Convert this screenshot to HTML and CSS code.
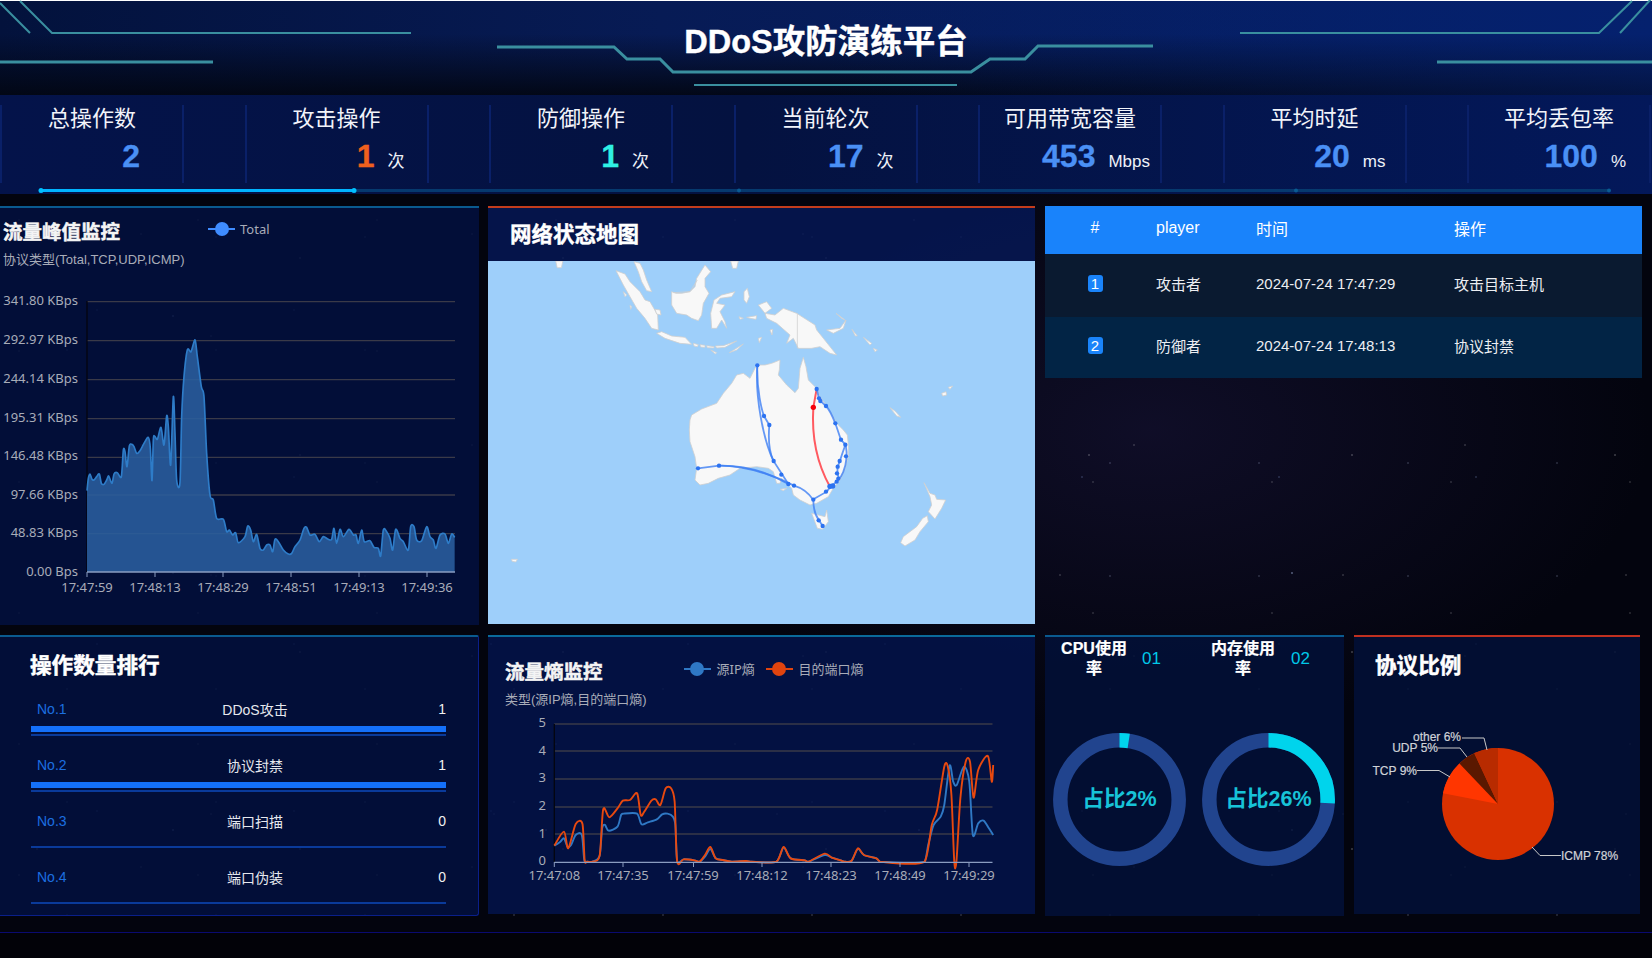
FILE: index.html
```html
<!DOCTYPE html>
<html lang="zh">
<head>
<meta charset="utf-8">
<title>DDoS攻防演练平台</title>
<link rel="stylesheet" href="styles.css">
</head>
<body>
<div class="page">
  <header class="topbar">
    <svg class="decor" viewBox="0 0 1652 95" aria-hidden="true">
      <g class="decor-thin">
        <polyline points="0,3 30,33"/>
        <polyline points="20,1 52,33 411,33"/>
        <polyline points="1240,33 1599,33 1632,1"/>
        <polyline points="1620,33 1652,-2"/>
        <polyline points="694,85 957,85"/>
      </g>
      <g class="decor-thick">
        <polyline points="0,62 213,62"/>
        <polyline points="1437,62 1652,62"/>
        <polyline points="497,47 614,47 627,59 660,59 673,72 971,72 990,59 1025,59 1038,46 1153,46"/>
      </g>
    </svg>
    <h1 class="title">DDoS攻防演练平台</h1>
  </header>

  <section class="stats">
    <div class="stat-grid">
      <div class="stat"><div class="stat-label">总操作数</div><div class="stat-value pr-44"><b class="blue">2</b></div></div>
      <div class="stat"><div class="stat-label">攻击操作</div><div class="stat-value pr-24"><b class="orange">1</b><span>次</span></div></div>
      <div class="stat"><div class="stat-label">防御操作</div><div class="stat-value pr-24"><b class="cyan">1</b><span>次</span></div></div>
      <div class="stat"><div class="stat-label">当前轮次</div><div class="stat-value pr-24"><b class="blue">17</b><span>次</span></div></div>
      <div class="stat"><div class="stat-label">可用带宽容量</div><div class="stat-value pr-12"><b class="blue">453</b><span>Mbps</span></div></div>
      <div class="stat"><div class="stat-label">平均时延</div><div class="stat-value pr-20"><b class="blue">20</b><span>ms</span></div></div>
      <div class="stat"><div class="stat-label">平均丢包率</div><div class="stat-value pr-25"><b class="blue">100</b><span>%</span></div></div>
    </div>
    <svg class="progress" viewBox="0 0 1652 8" aria-hidden="true">
      <line x1="41" y1="4.5" x2="1609" y2="4.5" class="p-dim"/>
      <line x1="41" y1="4.5" x2="354" y2="4.5" class="p-on"/>
      <circle cx="739" cy="4.5" r="2" class="p-dot-dim"/>
      <circle cx="1296" cy="4.5" r="2" class="p-dot-dim"/>
      <circle cx="1609" cy="4.5" r="2" class="p-dot-dim"/>
      <circle cx="41" cy="4.5" r="2.5" class="p-dot-on"/>
      <circle cx="354" cy="4.5" r="2.5" class="p-dot-on"/>
    </svg>
  </section>

  <main class="board">
    <section class="panel peak">
      <div class="chart-head">
        <h2 class="chart-title">流量峰值监控</h2>
        <div class="legend legend-peak"><span class="mark mark-blue"></span><span>Total</span></div>
      </div>
      <div class="subtitle">协议类型(Total,TCP,UDP,ICMP)</div>
      <svg class="chart" width="478" height="355" viewBox="0 270 478 355">
        <g class="grid-lines">
          <line x1="87" x2="455" y1="301.7" y2="301.7"/><line x1="87" x2="455" y1="340.7" y2="340.7"/>
          <line x1="87" x2="455" y1="379.7" y2="379.7"/><line x1="87" x2="455" y1="418.7" y2="418.7"/>
          <line x1="87" x2="455" y1="457.3" y2="457.3"/><line x1="87" x2="455" y1="495" y2="495"/>
          <line x1="87" x2="455" y1="533.7" y2="533.7"/>
        </g>
        <line class="axis-y" x1="87" x2="87" y1="301" y2="572"/>
        <g transform="translate(0,200) scale(.33333)">
          <polyline class="smooth area-line" data-base="1116" points="261,872 265,835 270,822 276,838 282,840 290,830 298,822 304,850 312,853 320,840 326,828 336,850 342,822 352,818 364,830 370,750 375,755 381,800 388,738 396,733 402,740 410,760 420,752 432,730 445,712 451,745 456,842 460,720 464,708 472,718 483,682 492,735 500,648 505,680 512,795 520,590 525,700 530,840 540,848 545,650 552,530 562,450 573,455 585,420 592,470 604,560 612,590 620,760 630,885 640,900 650,955 670,958 680,995 688,990 698,1005 707,998 715,1028 735,1010 743,978 752,990 760,1025 770,1003 780,1045 790,1050 800,1035 810,1035 818,1055 825,1018 835,1025 850,1050 865,1062 875,1060 885,1040 900,1020 912,985 920,982 930,1005 945,1003 958,1025 970,1010 985,1018 995,1018 1002,985 1010,1030 1020,988 1030,1010 1047,988 1060,1005 1068,1005 1075,1030 1085,990 1093,1025 1110,1022 1122,1042 1135,1045 1142,1068 1150,990 1160,995 1170,1015 1178,1050 1187,988 1200,1015 1210,1025 1225,1050 1232,980 1242,980 1250,1020 1265,1022 1280,980 1290,1010 1300,1020 1308,1045 1320,1005 1335,1002 1345,1030 1355,1002 1364,1012"/>
        </g>
        <line class="axis-x" x1="87" x2="455" y1="572" y2="572"/>
        <g class="ticks">
          <line x1="87" x2="87" y1="572" y2="577"/><line x1="155" x2="155" y1="572" y2="577"/><line x1="223" x2="223" y1="572" y2="577"/>
          <line x1="291" x2="291" y1="572" y2="577"/><line x1="359" x2="359" y1="572" y2="577"/><line x1="427" x2="427" y1="572" y2="577"/>
        </g>
        <g class="axis-label end">
          <text x="78" y="305">341.80 KBps</text><text x="78" y="343.500">292.97 KBps</text><text x="78" y="382.500">244.14 KBps</text>
          <text x="78" y="421.500">195.31 KBps</text><text x="78" y="460">146.48 KBps</text><text x="78" y="499">97.66 KBps</text>
          <text x="78" y="537">48.83 KBps</text><text x="78" y="576">0.00 Bps</text>
        </g>
        <g class="axis-label mid">
          <text x="87" y="591.500">17:47:59</text><text x="155" y="591.500">17:48:13</text><text x="223" y="591.500">17:48:29</text>
          <text x="291" y="591.500">17:48:51</text><text x="359" y="591.500">17:49:13</text><text x="427" y="591.500">17:49:36</text>
        </g>
      </svg>
    </section>

    <section class="panel map-panel">
      <h2 class="map-title">网络状态地图</h2>
      <svg class="map" width="547" height="363" viewBox="488 261 547 363">
        <rect x="488" y="261" width="547" height="363" class="sea"/>
        <g transform="translate(590,250) scale(.33333)" class="land">
          <polygon points="78,62 105,72 120,95 150,125 165,150 180,155 203,195 205,240 185,235 165,205 140,175 120,140 100,105"/>
          <polygon points="132,35 150,40 160,60 170,90 185,125 170,122 155,95 145,65"/>
          <polygon points="245,125 258,130 275,130 300,125 315,110 320,85 345,45 362,65 345,85 345,110 357,130 340,160 335,195 325,212 305,205 290,195 260,190 245,165"/>
          <polygon points="372,150 395,135 435,125 425,140 390,145 380,160 405,165 390,185 405,215 410,235 395,210 380,235 365,235 362,190"/>
          <polygon points="200,250 215,245 245,258 285,262 305,283 270,280 225,265"/>
          <polygon points="310,280 325,284 322,290 312,288"/>
          <polygon points="330,284 345,286 345,292 332,291"/>
          <polygon points="350,287 372,290 372,294 352,293"/>
          <polygon points="376,288 400,287 440,273 405,292 380,294"/>
          <polygon points="418,308 460,282 440,300"/>
          <polygon points="362,300 380,308 376,312"/>
          <polygon points="505,165 530,155 545,175 525,190 555,195 580,175 620,190 675,225 680,240 700,265 740,315 720,310 690,290 665,295 625,295 610,265 590,280 600,255 560,220 530,205 525,190"/>
          <polygon points="710,240 750,235 768,210 760,235 730,250"/>
          <polygon points="447,200 460,205 450,208"/>
          <polygon points="470,202 500,197 498,208 480,205"/>
          <polygon points="462,125 472,115 478,140 470,160 462,150"/>
          <polygon points="422,33 445,33 440,55 428,55"/>
          <polygon points="195,178 210,180 213,195 200,192"/>
          <polygon points="100,125 110,135 105,140"/>
          <polygon points="120,165 125,170 122,178"/>
          <polygon points="786,238 802,258 796,258"/>
          <polygon points="820,262 845,280 840,285"/>
          <polygon points="850,295 862,300 855,305"/>
          <polygon points="738,190 765,210 755,205"/>
          <polygon points="540,240 548,238 546,255"/>
          <polygon points="505,265 515,262 508,278"/>
          <polyline class="land-border" points="250,128 300,125 322,90"/>
          <polyline class="land-border" points="622,190 622,295"/>
        </g>
        <g transform="translate(480,200) scale(.35714,.33333)" class="land">
          <polygon points="212,183 232,183 228,203 216,203"/>
          <polygon points="88,1078 105,1078 100,1086 90,1084"/>
        </g>
        <g transform="translate(640,340) scale(.33333)">
          <g class="land">
            <polygon points="150,240 155,225 185,207 230,190 250,160 275,130 290,105 310,100 330,115 345,85 352,75 375,75 395,70 420,60 418,90 415,105 440,135 465,158 475,145 480,85 490,52 498,80 505,120 525,140 540,170 565,205 590,250 610,270 622,285 625,315 625,350 615,385 600,420 580,445 565,470 530,490 510,495 480,480 460,465 455,445 440,430 425,415 420,430 410,430 400,395 385,385 350,380 300,385 270,405 235,415 205,430 180,435 165,420 170,385 165,350 150,305 148,270"/>
            <polygon points="515,520 555,530 560,510 565,545 548,568 532,565"/>
            <polygon points="420,448 440,445 430,452"/>
            <polygon points="852,428 870,460 885,465 890,478 917,480 905,505 885,537 865,515 875,495 870,470"/>
            <polygon points="862,527 865,545 840,575 825,600 795,618 782,608 790,590 830,560 848,535"/>
            <polygon points="750,203 765,213 782,232 770,228"/>
            <polygon points="905,160 918,155 920,165 908,168"/>
            <polygon points="925,142 938,138 930,148"/>
          </g>
          <g class="route-red">
            <path d="M530,147 L520,202 C515,280 525,360 570,440"/>
          </g>
          <g class="route-blue">
            <path d="M352,76 C345,170 370,300 400,362 L445,432"/>
            <path d="M352,76 C350,150 365,210 372,228 L388,255 C385,290 385,330 400,362"/>
            <path d="M174,385 L237,377 C320,375 390,400 445,432"/>
            <path d="M237,377 C340,378 430,420 462,437 C490,445 510,465 520,480"/>
            <path d="M520,478 L560,455 L572,440 L590,425 L597,415 L592,400 L593,380 L600,362 C607,340 612,325 617,314 L603,300 L586,250 C578,230 570,210 558,198 L541,183 L537,175 L530,147"/>
            <path d="M617,314 C622,340 620,370 610,395 C605,410 595,420 590,425"/>
            <path d="M520,480 C520,510 525,525 537,541 L548,558"/>
          </g>
          <g class="route-dots">
            <circle cx="352" cy="76" r="6.500"/><circle cx="372" cy="228" r="6.500"/><circle cx="388" cy="255" r="6.500"/><circle cx="401" cy="363" r="6.500"/>
            <circle cx="424" cy="404" r="6.500"/><circle cx="445" cy="432" r="6.500"/><circle cx="462" cy="437" r="6.500"/><circle cx="520" cy="479" r="6.500"/>
            <circle cx="558" cy="455" r="6.500"/><circle cx="570" cy="439" r="8"/><circle cx="578" cy="438" r="8"/><circle cx="590" cy="425" r="6.500"/>
            <circle cx="595" cy="416" r="6.500"/><circle cx="591" cy="400" r="6.500"/><circle cx="593" cy="380" r="6.500"/><circle cx="599" cy="363" r="6.500"/>
            <circle cx="618" cy="349" r="6.500"/><circle cx="616" cy="314" r="6.500"/><circle cx="603" cy="299" r="6.500"/><circle cx="586" cy="250" r="6.500"/>
            <circle cx="558" cy="198" r="6.500"/><circle cx="541" cy="183" r="6.500"/><circle cx="537" cy="175" r="6.500"/><circle cx="530" cy="147" r="6.500"/>
            <circle cx="237" cy="377" r="6.500"/><circle cx="174" cy="385" r="6.500"/><circle cx="536" cy="541" r="6.500"/><circle cx="548" cy="558" r="6.500"/>
          </g>
          <circle cx="520" cy="202" r="8" class="dot-red"/>
        </g>
      </svg>
    </section>

    <section class="table-panel">
      <table class="ops">
        <thead><tr><th class="c-num">#</th><th class="c-player">player</th><th class="c-time">时间</th><th>操作</th></tr></thead>
        <tbody>
          <tr class="row-a"><td class="c-num"><span class="badge">1</span></td><td>攻击者</td><td>2024-07-24 17:47:29</td><td>攻击目标主机</td></tr>
          <tr class="row-b"><td class="c-num"><span class="badge">2</span></td><td>防御者</td><td>2024-07-24 17:48:13</td><td>协议封禁</td></tr>
        </tbody>
      </table>
    </section>

    <section class="panel rank">
      <h2 class="rank-title">操作数量排行</h2>
      <div class="rank-row"><div class="rank-text"><span class="no">No.1</span><span class="name">DDoS攻击</span><span class="val">1</span></div><div class="track"><div class="fill" style="width:100%"></div></div></div>
      <div class="rank-row"><div class="rank-text"><span class="no">No.2</span><span class="name">协议封禁</span><span class="val">1</span></div><div class="track"><div class="fill" style="width:100%"></div></div></div>
      <div class="rank-row"><div class="rank-text"><span class="no">No.3</span><span class="name">端口扫描</span><span class="val">0</span></div><div class="track"><div class="fill" style="width:0"></div></div></div>
      <div class="rank-row"><div class="rank-text"><span class="no">No.4</span><span class="name">端口伪装</span><span class="val">0</span></div><div class="track"><div class="fill" style="width:0"></div></div></div>
    </section>

    <section class="panel entropy">
      <div class="chart-head entropy-head">
        <h2 class="chart-title">流量熵监控</h2>
        <div class="legend legend-entropy"><span class="mark mark-steel"></span><span class="lg-a">源IP熵</span><span class="mark mark-orange"></span><span>目的端口熵</span></div>
      </div>
      <div class="subtitle entropy-sub">类型(源IP熵,目的端口熵)</div>
      <svg class="chart" width="547" height="206" viewBox="488 708 547 206">
        <g class="grid-lines">
          <line x1="554.300" x2="992.500" y1="724" y2="724"/><line x1="554.300" x2="992.500" y1="751" y2="751"/><line x1="554.300" x2="992.500" y1="779" y2="779"/>
          <line x1="554.300" x2="992.500" y1="807" y2="807"/><line x1="554.300" x2="992.500" y1="834" y2="834"/>
        </g>
        <line class="axis-y" x1="554.300" x2="554.300" y1="724" y2="862"/>
        <g transform="translate(480,625) scale(.35714,.33333)">
          <polyline class="smooth ln-steel" points="208,662 225,650 235,640 245,665 255,660 268,630 285,630 292,705 300,710 315,710 335,692 342,610 350,600 360,617 385,605 395,570 402,566 440,566 452,598 470,592 495,583 510,568 525,566 540,575 547,600 552,708 570,703 600,706 615,710 630,695 645,672 660,700 680,705 705,710 745,708 760,710 830,710 850,668 870,700 910,706 920,710 965,690 985,698 1010,706 1020,710 1040,708 1058,672 1075,690 1110,700 1120,710 1245,710 1255,660 1270,600 1290,575 1300,540 1315,422 1325,470 1335,480 1355,425 1370,470 1380,630 1395,595 1410,587 1425,610 1437,630"/>
          <polyline class="smooth ln-orange" points="208,662 235,620 247,670 268,597 287,597 293,705 300,710 315,710 335,692 345,553 362,577 385,550 400,527 420,525 440,505 450,570 460,560 480,527 492,523 505,540 520,490 535,490 545,530 552,708 570,703 600,706 615,710 630,690 645,666 660,700 680,705 705,710 745,708 760,710 830,710 850,666 870,700 910,706 920,710 965,686 985,698 1010,706 1020,710 1040,708 1058,670 1075,690 1110,700 1120,710 1245,710 1265,600 1280,555 1300,425 1310,425 1320,510 1328,710 1334,710 1345,520 1360,410 1372,410 1382,518 1395,435 1422,393 1433,470 1437,420"/>
        </g>
        <line class="axis-x" x1="554.300" x2="992.500" y1="862.300" y2="862.300"/>
        <g class="ticks">
          <line x1="554.300" x2="554.300" y1="862" y2="867"/><line x1="623" x2="623" y1="862" y2="867"/><line x1="693.500" x2="693.500" y1="862" y2="867"/>
          <line x1="762" x2="762" y1="862" y2="867"/><line x1="831" x2="831" y1="862" y2="867"/><line x1="900" x2="900" y1="862" y2="867"/><line x1="969" x2="969" y1="862" y2="867"/>
        </g>
        <g class="axis-label end">
          <text x="546" y="727">5</text><text x="546" y="754.500">4</text><text x="546" y="782">3</text>
          <text x="546" y="809.500">2</text><text x="546" y="837.500">1</text><text x="546" y="865">0</text>
        </g>
        <g class="axis-label mid">
          <text x="554.300" y="880">17:47:08</text><text x="623" y="880">17:47:35</text><text x="693" y="880">17:47:59</text>
          <text x="762" y="880">17:48:12</text><text x="831" y="880">17:48:23</text><text x="900" y="880">17:48:49</text><text x="969" y="880">17:49:29</text>
        </g>
      </svg>
    </section>

    <div class="bottom-right">
      <section class="panel usage">
        <div class="usage-item">
          <div class="usage-head"><div class="usage-label">CPU使用率</div><div class="usage-no">01</div></div>
          <svg class="ring" width="149" height="149" viewBox="0 0 149 149">
            <circle cx="74.500" cy="74.500" r="59.200" class="ring-bg"/>
            <circle cx="74.500" cy="74.500" r="59.200" class="ring-on" pathLength="100" stroke-dasharray="2.500 97.500" transform="rotate(-90 74.500 74.500)"/>
            <text x="74.500" y="81" class="ring-text">占比2%</text>
          </svg>
        </div>
        <div class="usage-item">
          <div class="usage-head"><div class="usage-label">内存使用率</div><div class="usage-no">02</div></div>
          <svg class="ring" width="149" height="149" viewBox="0 0 149 149">
            <circle cx="74.500" cy="74.500" r="59.200" class="ring-bg"/>
            <circle cx="74.500" cy="74.500" r="59.200" class="ring-on" pathLength="100" stroke-dasharray="26 74" transform="rotate(-90 74.500 74.500)"/>
            <text x="74.500" y="81" class="ring-text">占比26%</text>
          </svg>
        </div>
      </section>

      <section class="panel proto">
        <h2 class="proto-title">协议比例</h2>
        <svg class="chart" width="286" height="238" viewBox="1354 676 286 238">
          <circle cx="1498" cy="804" r="56" class="s-icmp"/>
          <path d="M1498,804 L1443,793.300 A56,56 0 0 1 1459.500,763.400 Z" class="s-tcp"/>
          <path d="M1498,804 L1459.500,763.400 A56,56 0 0 1 1474.300,753.300 Z" class="s-udp"/>
          <path d="M1498,804 L1474.300,753.300 A56,56 0 0 1 1498,748 Z" class="s-other"/>
          <g class="leader">
            <polyline points="1462,738 1484,738 1487,750"/>
            <polyline points="1438,748 1460,748 1467,757"/>
            <polyline points="1417,770.500 1439,770.500 1450,777"/>
            <polyline points="1532,847 1540,855.500 1561,855.500"/>
          </g>
          <g class="pie-label">
            <text x="1461" y="741" class="end-text">other 6%</text>
            <text x="1438" y="751.500" class="end-text">UDP 5%</text>
            <text x="1417" y="774.500" class="end-text">TCP 9%</text>
            <text x="1561" y="860">ICMP 78%</text>
          </g>
        </svg>
      </section>
    </div>
  </main>
  <footer class="foot"></footer>
</div>
<script src="charts.js"></script>
</body>
</html>
```
FILE: styles.css
```css
* { box-sizing: border-box; }
html, body { margin: 0; padding: 0; }
body {
  width: 1652px;
  height: 958px;
  overflow: hidden;
  color: #fff;
  font-family: "Liberation Sans", "Noto Sans CJK SC", sans-serif;
  background-color: #03040e;
  background-image:
    radial-gradient(1px 1px at 37px 61px, rgba(255,255,255,.6), transparent),
    radial-gradient(1px 1px at 141px 23px, rgba(255,255,255,.45), transparent),
    radial-gradient(1px 1px at 97px 143px, rgba(160,190,255,.55), transparent),
    radial-gradient(1px 1px at 211px 97px, rgba(255,255,255,.45), transparent),
    radial-gradient(1px 1px at 67px 11px, rgba(200,215,255,.5), transparent),
    radial-gradient(1px 1px at 19px 89px, rgba(255,255,255,.4), transparent),
    radial-gradient(1.5px 1.5px at 173px 59px, rgba(190,210,255,.6), transparent),
    radial-gradient(ellipse 500px 300px at 1150px 430px, rgba(30,25,70,.45), transparent);
  background-size: 263px 197px, 331px 211px, 197px 167px, 283px 239px, 149px 113px, 179px 131px, 373px 257px, 100% 100%;
}
.page { display: flex; flex-direction: column; width: 1652px; height: 958px; }

/* header */
.topbar {
  position: relative;
  height: 95px;
  border-top: 1px solid #fff;
  padding-top: 22px;
  background:
    linear-gradient(90deg, rgba(5,33,110,0) 50%, rgba(5,33,110,.5) 100%),
    linear-gradient(180deg, rgba(2,6,18,0) 35%, rgba(2,6,18,.92) 100%),
    linear-gradient(90deg, #03123c, #071b55 40%, #051f66 80%, #05216e);
}
.decor { position: absolute; left: 0; top: -1px; width: 1652px; height: 95px; }
.decor polyline { fill: none; stroke: #3a8f9f; }
.decor-thin polyline { stroke-width: 2; }
.decor-thick polyline { stroke-width: 3; }
.title {
  position: relative;
  margin: 0;
  font-size: 32.5px;
  line-height: 38px;
  font-weight: 700;
  text-align: center;
  -webkit-text-stroke: .4px #fff;
}

/* stats */
.stats {
  height: 99px;
  padding-top: 10px;
  background: linear-gradient(90deg, #04134a, #041240 45%, #03185a);
}
.stat-grid { display: grid; grid-template-columns: repeat(7, 184px); column-gap: 60.5px; height: 78px; }
.stat { border-left: 2px solid #0a2068; border-right: 2px solid #0a2068; }
.stat-label { font-size: 22px; line-height: 28px; text-align: center; color: #f2f4fa; }
.stat-value { display: flex; justify-content: flex-end; align-items: baseline; gap: 13px; line-height: 38px; margin-top: 4px; }
.stat-value b { font-size: 32px; font-weight: 700; -webkit-text-stroke: .3px currentColor; }
.stat-value span { font-size: 17px; color: #eef1f8; }
.pr-44 { padding-right: 42px; }
.pr-24 { padding-right: 22px; }
.pr-12 { padding-right: 10px; }
.pr-20 { padding-right: 19px; }
.pr-25 { padding-right: 23px; }
.blue { color: #4a90f5; }
.orange { color: #f0601e; }
.cyan { color: #2ff0e4; }
.progress { display: block; width: 1652px; height: 8px; margin-top: 3px; }
.p-dim { stroke: #06396e; stroke-width: 3; }
.p-on { stroke: #00b4ff; stroke-width: 3; }
.p-dot-dim { fill: #0a5a92; }
.p-dot-on { fill: #00c0ff; }

/* board */
.board {
  display: grid;
  grid-template-columns: 479px 547px 597px;
  grid-template-rows: 419px 281px;
  column-gap: 9px;
  row-gap: 10px;
  margin-top: 12px;
}
.panel { background: rgba(2,17,63,.85); border-top: 2px solid #0a5a8f; }
.chart { display: block; }
.chart-head { display: flex; align-items: center; padding: 12px 0 0 3px; }
.chart-title { margin: 0; font-size: 19.5px; line-height: 24px; font-weight: 700; color: #f4f4f4; -webkit-text-stroke: .5px #f4f4f4; }
.subtitle { margin: 8px 0 0 3px; font-size: 13px; line-height: 16px; color: #a8acb8; }
.peak .chart { margin-top: 2px; }
.legend { display: flex; align-items: center; font-size: 13px; line-height: 16px; color: #a8acb8; font-family: "Noto Sans", "Noto Sans CJK SC", sans-serif; padding-bottom: 6px; }
.legend-peak { margin-left: 88px; }
.mark { position: relative; display: block; width: 27px; height: 2px; margin-right: 5px; }
.mark::after { content: ""; position: absolute; left: 6.500px; top: -6px; width: 14px; height: 14px; border-radius: 50%; background: inherit; }
.mark-blue { background: #3f8cff; }
.mark-steel { background: #2f78c4; margin-right: 6px; }
.mark-orange { background: #e0440e; margin-right: 6px; }
.lg-a { width: 49px; }
.grid-lines line { stroke: #3a3a48; stroke-width: 1.300; }
.axis-y { stroke: #05060f; stroke-width: 1.300; }
.axis-x { stroke: #8a9cc0; stroke-width: 1.300; }
.ticks line { stroke: #8a9cc0; stroke-width: 1; }
.axis-label text { font-family: "Noto Sans", sans-serif; font-size: 13px; fill: #a8acb8; }
.axis-label.end text { text-anchor: end; }
.axis-label.mid text { text-anchor: middle; }
.area-fill { fill: #2a5f9e; fill-opacity: .88; }
.area-line { fill: none; stroke: #2e7cc8; stroke-width: 5; stroke-linejoin: round; }

/* map */
.map-panel { border-top-color: #c43c1c; background: transparent; }
.map-title {
  margin: 0;
  height: 53px;
  padding: 13px 0 0 22px;
  font-size: 21.5px;
  line-height: 28px;
  font-weight: 700;
  background: rgba(6,24,85,.85);
  -webkit-text-stroke: .4px #fff;
}
.map { display: block; }
.sea { fill: #9ecffa; }
.land polygon { fill: #f8f8f8; stroke: #cfcfcf; stroke-width: .8; vector-effect: non-scaling-stroke; stroke-linejoin: round; }
.land-border { fill: none; stroke: #cfcfcf; stroke-width: .8; vector-effect: non-scaling-stroke; }
.route-red path { fill: none; stroke: #ff5a60; stroke-width: 2; vector-effect: non-scaling-stroke; }
.route-blue path { fill: none; stroke: #3f80f4; stroke-width: 1.800; stroke-opacity: .8; vector-effect: non-scaling-stroke; }
.route-dots circle { fill: #2c72f0; }
.dot-red { fill: #f5000a; }

/* table */
.table-panel { margin-left: 1px; align-self: start; }
.ops { width: 597px; border-collapse: collapse; table-layout: fixed; font-size: 15px; color: #eceef2; }
.ops th, .ops td { padding: 0 0 5px; text-align: left; font-weight: 400; }
.ops th { padding-bottom: 4px; font-size: 16px; }
.ops thead tr { height: 48px; background: #1983fb; color: #fff; }
.row-a { height: 63px; background: #0a1a30; }
.row-b { height: 61px; background: #022445; }
.ops .c-num { width: 111px; text-align: center; padding-right: 11px; }
.c-player { width: 100px; }
.c-time { width: 198px; }
.badge { display: inline-block; width: 15px; height: 17px; line-height: 17px; border-radius: 3px; background: #1a84fa; color: #fff; font-size: 15px; text-align: center; vertical-align: middle; }

/* rank */
.rank { padding: 17px 32px 0 31px; border-right: 1px solid #0a1f8a; border-bottom: 1px solid #0a1f8a; border-radius: 0 2px 3px 0; }
.rank-title { margin: 0 0 0 -1px; padding-bottom: 2px; font-size: 21.6px; line-height: 24px; font-weight: 700; -webkit-text-stroke: .5px #fff; }
.rank-row { margin-top: 19px; }
.rank-text { display: grid; grid-template-columns: 136px 176px 1fr; align-items: center; height: 20px; font-size: 14px; margin-bottom: 7px; }
.no { padding-left: 6px; color: #1c6fe0; }
.name { text-align: center; color: #e6e8ee; }
.val { text-align: right; color: #f0f0f0; }
.track { height: 10px; padding-bottom: 2px; border-bottom: 2px solid #0a3a9a; }
.fill { height: 6px; background: #1470fa; }

/* entropy */
.entropy { border-top-color: #0a6a9a; height: 279px; background: rgba(3,20,75,.85); }
.entropy-head { padding: 23px 0 0 17px; }
.entropy-sub { margin-left: 17px; }
.legend-entropy { margin-left: 81px; }
.ln-steel, .ln-orange { fill: none; stroke-width: 1.900; stroke-linejoin: round; vector-effect: non-scaling-stroke; }
.ln-steel { stroke: #2f78c4; }
.ln-orange { stroke: #e8490f; }

/* bottom right */
.bottom-right { display: grid; grid-template-columns: 299px 286px; column-gap: 10px; margin-left: 1px; align-items: start; }
.usage { display: grid; grid-template-columns: 149px 149px; height: 281px; background: rgba(2,16,56,.85); }
.usage-head { display: flex; align-items: center; padding: 2px 0 0 10px; }
.usage-label { width: 78px; font-size: 16px; line-height: 20px; font-weight: 700; text-align: center; -webkit-text-stroke: .2px #fff; }
.usage-no { margin-left: 9px; font-size: 17px; color: #00c8e8; }
.ring { display: block; margin-top: 46px; }
.ring-bg, .ring-on { fill: none; stroke-width: 14.500; }
.ring-bg { stroke: #21448e; }
.ring-on { stroke: #00d4ec; }
.ring-text { font-size: 21.5px; font-weight: 700; text-anchor: middle; fill: #17c3d8; }
.proto { height: 279px; border-top-color: #c03020; background: rgba(2,16,56,.85); padding-top: 17px; }
.proto-title { margin: 0 0 0 21px; font-size: 21.6px; line-height: 24px; font-weight: 700; -webkit-text-stroke: .5px #fff; }
.proto .chart { margin-top: -2px; }
.s-icmp { fill: #d93100; }
.s-tcp { fill: #ff3600; }
.s-udp { fill: #5a1800; }
.s-other { fill: #b82b00; }
.leader polyline { fill: none; stroke: #c8c8c8; stroke-width: 1; }
.pie-label text { font-size: 12px; fill: #d0d2d8; stroke: #d0d2d8; stroke-width: .2; }
.pie-label .end-text { text-anchor: end; }

.foot { margin-top: 16px; height: 26px; border-top: 1px solid #0a0a70; background: #020208; }
```
FILE: charts.js
```js
// Turn the sampled series into smooth curves, the way the chart library draws them.
(function () {
  var SVG = "http://www.w3.org/2000/svg";
  var TENSION = 0.14;

  function parse(el) {
    return el.getAttribute("points").trim().split(/\s+/).map(function (p) {
      return p.split(",").map(Number);
    });
  }

  function curve(pts) {
    var d = "M" + pts[0][0] + "," + pts[0][1];
    for (var i = 0; i < pts.length - 1; i++) {
      var p0 = pts[Math.max(i - 1, 0)];
      var p1 = pts[i];
      var p2 = pts[i + 1];
      var p3 = pts[Math.min(i + 2, pts.length - 1)];
      var dx = p2[0] - p1[0];
      var c1x = p1[0] + Math.min((p2[0] - p0[0]) * TENSION, dx / 2);
      var c1y = p1[1] + (p2[1] - p0[1]) * TENSION;
      var c2x = p2[0] - Math.min((p3[0] - p1[0]) * TENSION, dx / 2);
      var c2y = p2[1] - (p3[1] - p1[1]) * TENSION;
      d += " C" + c1x.toFixed(1) + "," + c1y.toFixed(1) + " " + c2x.toFixed(1) + "," + c2y.toFixed(1) + " " + p2[0] + "," + p2[1];
    }
    return d;
  }

  document.querySelectorAll("polyline.smooth").forEach(function (line) {
    var pts = parse(line);
    var d = curve(pts);
    var base = line.getAttribute("data-base");
    if (base) {
      var area = document.createElementNS(SVG, "path");
      area.setAttribute("class", "area-fill");
      area.setAttribute("d", d + " L" + pts[pts.length - 1][0] + "," + base + " L" + pts[0][0] + "," + base + " Z");
      line.parentNode.insertBefore(area, line);
    }
    var path = document.createElementNS(SVG, "path");
    path.setAttribute("class", line.getAttribute("class"));
    path.setAttribute("d", d);
    line.parentNode.replaceChild(path, line);
  });
})();
```
